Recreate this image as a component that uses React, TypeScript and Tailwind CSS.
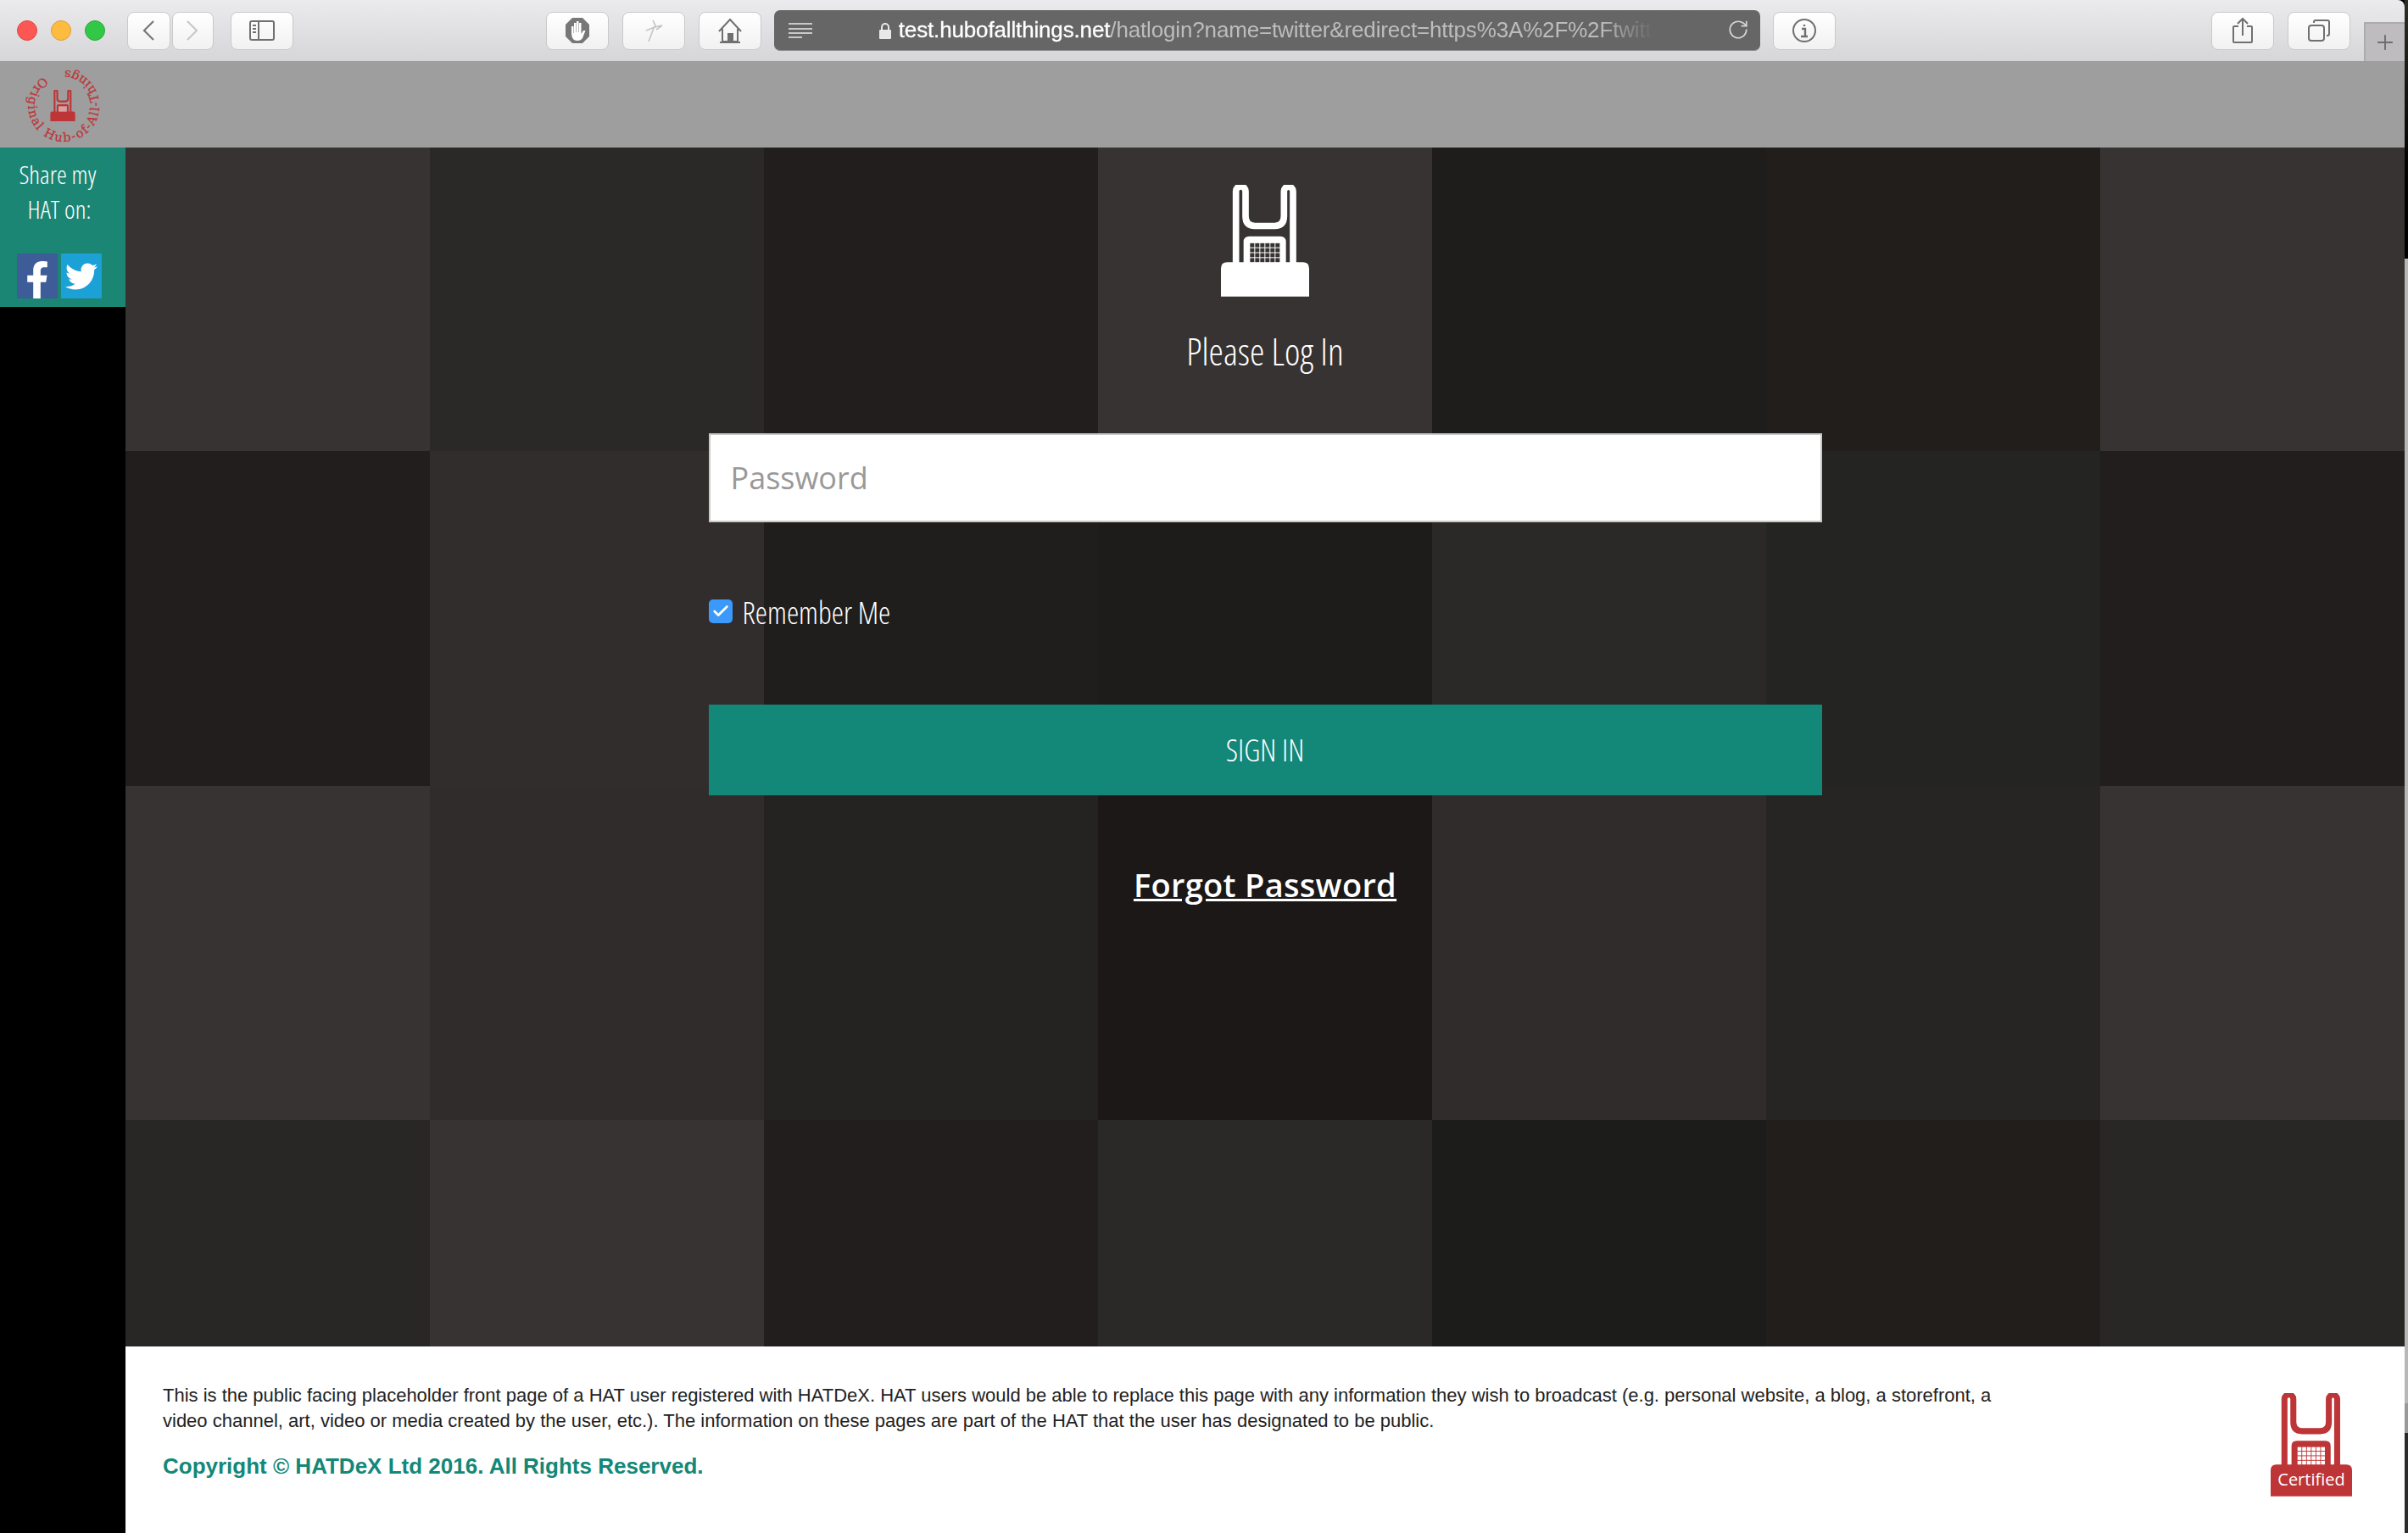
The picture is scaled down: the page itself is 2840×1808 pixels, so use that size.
import { Check, Plus, RotateCw } from "lucide-react";
import { FaFacebookF, FaTwitter } from "react-icons/fa";

const tileColumns = ["w-[359px]", "w-[394px]", "w-[394px]", "w-[394px]", "w-[394px]", "w-[394px]", "flex-1"];

const tileRows = [
  {
    height: "h-[358px]",
    tiles: ["bg-[#373332]", "bg-[#2a2927]", "bg-[#211e1d]", "bg-[#373332]", "bg-[#1e1d1b]", "bg-[#211e1c]", "bg-[#373332]"],
  },
  {
    height: "h-[395px]",
    tiles: ["bg-[#211e1d]", "bg-[#312d2c]", "bg-[#1f1e1c]", "bg-[#1e1c1b]", "bg-[#2a2927]", "bg-[#242422]", "bg-[#211e1d]"],
  },
  {
    height: "h-[394px]",
    tiles: ["bg-[#373332]", "bg-[#302c2b]", "bg-[#242321]", "bg-[#1b1817]", "bg-[#302c2b]", "bg-[#262523]", "bg-[#373332]"],
  },
  {
    height: "flex-1",
    tiles: ["bg-[#282725]", "bg-[#373332]", "bg-[#211e1d]", "bg-[#2a2927]", "bg-[#1c1c1a]", "bg-[#211e1c]", "bg-[#282725]"],
  },
];

function HatShape({ color }: { color: string }) {
  return (
    <>
      <path
        d="M473 395V137a17 17 0 0 1 34 0v88q0 35 33 35h70q33 0 33-35v-88a16 16 0 0 1 32 0v258"
        fill="none"
        stroke={color}
        strokeWidth="23"
      />
      <path d="M500 395v-78q0-20 20-20h110q20 0 20 20v78z" fill={color} />
      <path d="M420 510v-100q0-22 22-22h268q22 0 22 22v100z" fill={color} />
    </>
  );
}

function HatIcon({ color, cell, className }: { color: string; cell: string; className: string }) {
  const cols = [0, 1, 2, 3, 4, 5];
  const rows = [0, 1, 2, 3];
  return (
    <svg viewBox="420 115 312 395" className={className}>
      <HatShape color={color} />
      {rows.map((r) =>
        cols.map((c) => (
          <rect key={`${r}-${c}`} x={523 + c * 18} y={321 + r * 17.5} width="15" height="14.5" fill={cell} />
        )),
      )}
    </svg>
  );
}

function CircleLogo() {
  return (
    <svg viewBox="0 0 90 90" className="w-[90px] h-[90px] overflow-visible">
      <defs>
        <path id="ring" d="M21 10.700A42 42 0 1 0 45 3" />
      </defs>
      <text fill="#bd3537" stroke="#bd3537" strokeWidth="0.3" fontSize="14.5" fontFamily="'DejaVu Serif', serif">
        <textPath href="#ring" textLength="236" lengthAdjust="spacing">
          Original Hub-of-All-Things
        </textPath>
      </text>
      <svg x="29" y="26" width="30" height="37" viewBox="420 115 312 395">
        <HatShape color="#bd3537" />
        <rect x="523" y="321" width="105" height="68" fill="#d9a0a0" />
      </svg>
    </svg>
  );
}

function ToolButton({ className, children }: { className: string; children?: React.ReactNode }) {
  return (
    <div
      className={`h-[45px] rounded-[8px] border border-[#c9c8ca] bg-gradient-to-b from-white to-[#f1f1f2] flex items-center justify-center text-[#6f6f6f] ${className}`}
    >
      {children}
    </div>
  );
}

function Toolbar() {
  return (
    <div className="h-[72px] shrink-0 flex bg-gradient-to-b from-[#ebeaed] to-[#d6d5d8] items-center pl-[20px] rounded-tr-[8px]">
      <div className="flex gap-[16px] w-[130px]">
        <span className="w-[24px] h-[24px] rounded-full bg-[#fc5753] border border-[#df4744]" />
        <span className="w-[24px] h-[24px] rounded-full bg-[#fdbc40] border border-[#de9f34]" />
        <span className="w-[24px] h-[24px] rounded-full bg-[#33c748] border border-[#27aa35]" />
      </div>
      <div className="flex gap-[2px]">
        <ToolButton className="w-[51px]">
          <svg viewBox="0 0 14 24" className="w-[14px] h-[24px]" fill="none" stroke="#777777" strokeWidth="2.2">
            <path d="M13 1 2 12l11 11" />
          </svg>
        </ToolButton>
        <ToolButton className="w-[49px]">
          <svg viewBox="0 0 14 24" className="w-[14px] h-[24px]" fill="none" stroke="#c8c8c8" strokeWidth="2.2">
            <path d="m1 1 11 11L1 23" />
          </svg>
        </ToolButton>
      </div>
      <ToolButton className="w-[74px] ml-[20px]">
        <svg viewBox="0 0 30 24" className="w-[30px] h-[24px]" fill="none" stroke="currentColor" strokeWidth="2">
          <rect x="1" y="1" width="28" height="22" rx="2" />
          <path d="M11 1v22M4 6h4M4 10h4M4 14h4" />
        </svg>
      </ToolButton>
      <ToolButton className="w-[74px] ml-[298px]">
        <svg viewBox="0 0 30 32" className="w-[30px] h-[32px]">
          <path d="M9 1h12l8 8v14l-8 8H9l-8-8V9z" fill="#777777" />
          <path
            d="M8 19V11H10.500V19H11V7H13.500V18H14V5H16.500V18H17V7H19.500V20L22 16H24.500L21 25Q19 28 15 28Q8 28 8 19Z"
            fill="#ffffff"
          />
        </svg>
      </ToolButton>
      <ToolButton className="w-[74px] ml-[16px]">
        <svg viewBox="0 0 30 30" className="w-[30px] h-[30px]" fill="none" stroke="#c4c4c4" strokeWidth="1.6">
          <path d="M9 28 15 12M6 15l10-4 9-2-7 5M15 12l2-3-3-6" />
        </svg>
      </ToolButton>
      <ToolButton className="w-[74px] ml-[16px]">
        <svg viewBox="0 0 30 32" className="w-[30px] h-[32px]" fill="none" stroke="#707070" strokeWidth="2">
          <path d="M2 17 15 3l13 14M6 14v15h18V14M3 30h24" />
          <rect x="13" y="20" width="5" height="9" fill="#707070" />
        </svg>
      </ToolButton>
      <div className="w-[1164px] h-[48px] ml-[15px] rounded-[7px] bg-[#666666] border-b border-[#8c8c8c] flex items-center relative">
        <svg viewBox="0 0 28 20" className="w-[28px] h-[20px] ml-[17px]" stroke="#c9c9c9" strokeWidth="2">
          <path d="M0 2h28M0 8h28M0 13h28M0 18h16" />
        </svg>
        <svg viewBox="0 0 16 20" className="w-[16px] h-[20px] ml-[78px]">
          <path d="M4 9V6a4 4 0 0 1 8 0v3" fill="none" stroke="#e8e8e8" strokeWidth="2" />
          <rect x="1" y="9" width="14" height="11" rx="1" fill="#e8e8e8" />
        </svg>
        <div className="ml-[8px] w-[890px] whitespace-nowrap text-[26px] tracking-[-0.15px] font-['Liberation_Sans',sans-serif] [mask-image:linear-gradient(to_right,black_93%,transparent)]">
          <span className="text-white [-webkit-text-stroke:0.3px_white]">test.hubofallthings.net</span>
          <span className="text-[#bdbdbd]">/hatlogin?name=twitter&amp;redirect=https%3A%2F%2Ftwitt</span>
        </div>
        <RotateCw size={26} strokeWidth={1.6} className="text-[#d5d5d5] absolute right-[13px] top-[10px]" />
      </div>
      <ToolButton className="w-[74px] ml-[15px]">
        <svg viewBox="0 0 30 30" className="w-[30px] h-[30px]" fill="none" stroke="#707070" strokeWidth="2">
          <circle cx="15" cy="15" r="13" />
          <path d="M12 13h4v9M11 22h8M15 8v2" strokeWidth="2.4" />
        </svg>
      </ToolButton>
      <ToolButton className="w-[74px] ml-[443px]">
        <svg viewBox="0 0 24 32" className="w-[24px] h-[32px]" fill="none" stroke="#707070" strokeWidth="2">
          <path d="M7 11H2a1 1 0 0 0-1 1v17a1 1 0 0 0 1 1h20a1 1 0 0 0 1-1V12a1 1 0 0 0-1-1h-5M12 22V2M6 8l6-6 6 6" />
        </svg>
      </ToolButton>
      <ToolButton className="w-[74px] ml-[16px]">
        <svg viewBox="0 0 26 26" className="w-[26px] h-[26px]" fill="none" stroke="#707070" strokeWidth="2">
          <rect x="1" y="7" width="18" height="18" rx="3" />
          <path d="M7 4V3a2 2 0 0 1 2-2h14a2 2 0 0 1 2 2v14a2 2 0 0 1-2 2h-1" />
        </svg>
      </ToolButton>
      <div className="w-[48px] h-[46px] ml-[16px] self-end bg-[#bebcbf] border-l-2 border-t-2 border-[#acacac] flex items-center justify-center">
        <Plus size={28} strokeWidth={1.6} className="text-[#6d6d6d]" />
      </div>
    </div>
  );
}

function Sidebar() {
  return (
    <aside className="w-[148px] shrink-0 bg-black">
      <div className="h-[188px] bg-[#1c8674] flex flex-col items-center pt-[11px] pr-[8px] text-white text-[30px] leading-[41px] font-light font-['Open_Sans',sans-serif] [font-stretch:75%]">
        <span className="-ml-[4px]">Share my</span>
        <span>HAT on:</span>
        <div className="flex gap-[4px] mt-[32px]">
          <div className="w-[48px] h-[53px] bg-[#3d5c98] flex items-end justify-center">
            <FaFacebookF className="w-[30px] h-[44px] text-white" />
          </div>
          <div className="w-[48px] h-[53px] bg-[#1ba1d6] flex items-center justify-center">
            <FaTwitter className="w-[38px] h-[38px] text-white" />
          </div>
        </div>
      </div>
    </aside>
  );
}

function TileBackground() {
  return (
    <div className="[grid-area:1/1] flex flex-col">
      {tileRows.map((row) => (
        <div key={row.height} className={`flex ${row.height}`}>
          {row.tiles.map((tile, i) => (
            <div key={i} className={`${tileColumns[i]} ${tile}`} />
          ))}
        </div>
      ))}
    </div>
  );
}

function LoginForm() {
  return (
    <div className="[grid-area:1/1] flex flex-col items-center text-white">
      <HatIcon color="#ffffff" cell="#373332" className="w-[104px] h-[132px] mt-[44px] shrink-0" />
      <h1 className="mt-[34px] text-[44px] leading-[60px] font-light font-['Open_Sans',sans-serif] [font-stretch:75%]">
        Please Log In
      </h1>
      <div className="mt-[67px] w-[1313px] flex flex-col">
        <input
          type="password"
          placeholder="Password"
          className="h-[105px] bg-white border-2 border-[#c8c8c8] px-[24px] text-[36px] font-['Open_Sans',sans-serif] text-black placeholder:text-[#999999] outline-none"
        />
        <label className="mt-[87px] flex items-center h-[40px] gap-[12px]">
          <span className="w-[28px] h-[28px] mb-[5px] rounded-[5px] bg-[#3b99fc] flex items-center justify-center">
            <Check size={22} strokeWidth={3} className="text-white" />
          </span>
          <span className="text-[36px] font-light font-['Open_Sans',sans-serif] [font-stretch:75%]">Remember Me</span>
        </label>
        <button className="mt-[88px] h-[107px] bg-[#138778] text-[36px] font-light font-['Open_Sans',sans-serif] [font-stretch:75%]">
          SIGN IN
        </button>
      </div>
      <a className="mt-[77px] text-[38px] font-semibold underline font-['Open_Sans',sans-serif] tracking-[0.3px]">
        Forgot Password
      </a>
    </div>
  );
}

function Footer() {
  return (
    <footer className="h-[220px] shrink-0 bg-white flex pl-[44px] font-['Liberation_Sans',sans-serif]">
      <div className="w-[2170px] pt-[43px]">
        <p className="text-[22px] leading-[30px] text-[#222222]">
          This is the public facing placeholder front page of a HAT user registered with HATDeX. HAT users would be able
          to replace this page with any information they wish to broadcast (e.g. personal website, a blog, a storefront, a
          <br />
          video channel, art, video or media created by the user, etc.). The information on these pages are part of the
          HAT that the user has designated to be public.
        </p>
        <p className="mt-[21px] text-[26px] leading-[34px] font-bold text-[#138778]">
          Copyright © HATDeX Ltd 2016. All Rights Reserved.
        </p>
      </div>
      <div className="ml-[316px] mt-[55px] relative w-[96px] h-[122px]">
        <HatIcon color="#bd3537" cell="#ffffff" className="w-[96px] h-[122px]" />
        <span className="absolute inset-x-0 bottom-[8px] text-center text-white text-[20px] leading-[24px] font-['Open_Sans',sans-serif]">
          Certified
        </span>
      </div>
    </footer>
  );
}

function ScrollEdge() {
  return (
    <div className="w-[4px] shrink-0 flex flex-col">
      <div className="h-[305px] bg-gradient-to-b from-[#2e2e28] to-black" />
      <div className="flex-1 bg-[#b7b7b7]" />
      <div className="h-[35px] bg-[#999999]" />
      <div className="h-[118px] bg-[#2b2b2b]" />
    </div>
  );
}

export default function App() {
  return (
    <div className="w-[2840px] h-[1808px] overflow-hidden flex bg-black">
      <div className="flex-1 flex flex-col min-w-0">
        <Toolbar />
        <div className="h-[102px] shrink-0 bg-[#9e9e9e] pl-[30px] pt-[4px] flex items-center">
          <CircleLogo />
        </div>
        <div className="flex-1 flex min-h-0">
          <Sidebar />
          <main className="flex-1 flex flex-col min-w-0">
            <div className="flex-1 grid min-h-0">
              <TileBackground />
              <LoginForm />
            </div>
            <Footer />
          </main>
        </div>
      </div>
      <ScrollEdge />
    </div>
  );
}
